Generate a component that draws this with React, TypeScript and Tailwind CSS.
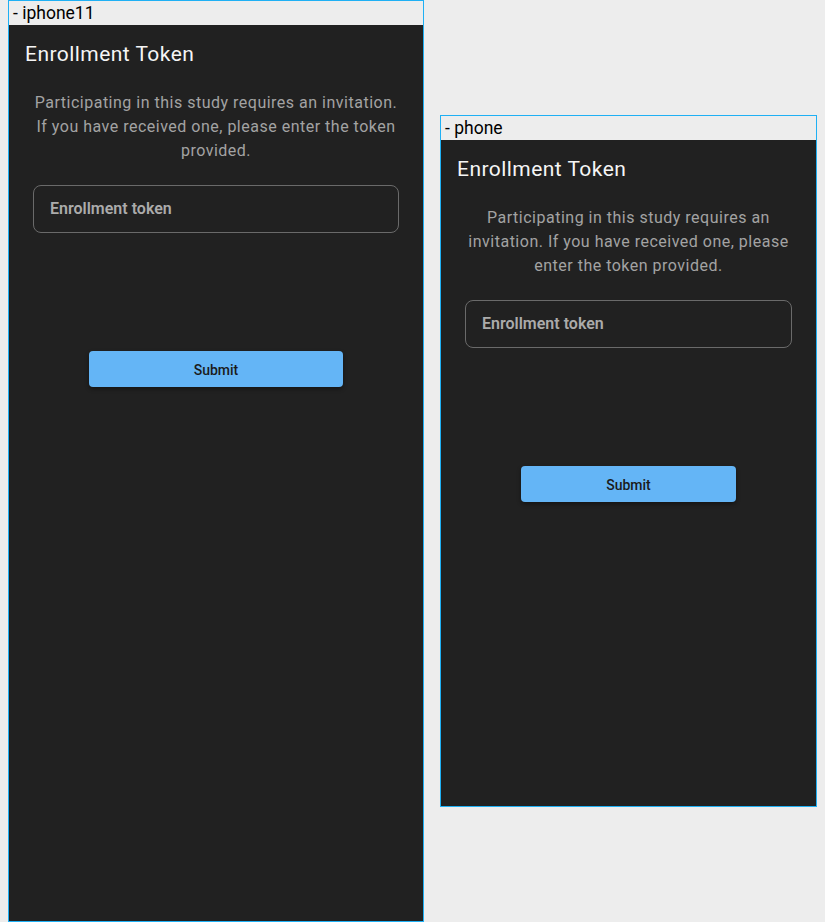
import React from "react";

const Screen = ({ label, height }: { label: string; height: string }) => {
  return (
    <div className="flex flex-col border border-[#1fb0f4] bg-[#ededed]">
      <div className="h-6 px-1 flex items-center text-[17.5px] leading-6 text-black">
        - {label}
      </div>
      <div className={`${height} bg-[#212121] flex flex-col`}>
        {/* toolbar */}
        <div className="h-14 px-4 pt-1 flex items-center">
          <h1 className="text-[21px] font-normal text-[#f5f5f5] tracking-[0.45px]">Enrollment Token</h1>
        </div>
        <div className="px-6 flex flex-col">
          <p className="mt-[10px] text-center text-[16px] leading-6 text-[#a3a3a3] tracking-[0.5px]">
            Participating in this study requires an invitation. If you have received one, please enter the token
            provided.
          </p>
          <div className="mt-[22px] h-12 rounded-lg border border-[#6a6a6a] px-4 flex items-center">
            <span className="text-[16px] font-semibold text-[#ababab]">Enrollment token</span>
          </div>
          <button className="mt-[118px] mx-14 h-9 pt-[2px] rounded bg-[#64b5f6] text-[14px] font-medium text-[#1b1b1b] shadow-[0_2px_4px_rgba(0,0,0,0.4)]">
            Submit
          </button>
        </div>
      </div>
    </div>
  );
};

export default function App() {
  return (
    <div className="w-[825px] h-[922px] bg-[#ededed] pl-2 flex items-center gap-4 overflow-hidden font-['Roboto',sans-serif]">
      <div className="w-[416px] shrink-0">
        <Screen label="iphone11" height="h-[896px]" />
      </div>
      <div className="w-[377px] shrink-0">
        <Screen label="phone" height="h-[666px]" />
      </div>
    </div>
  );
}
